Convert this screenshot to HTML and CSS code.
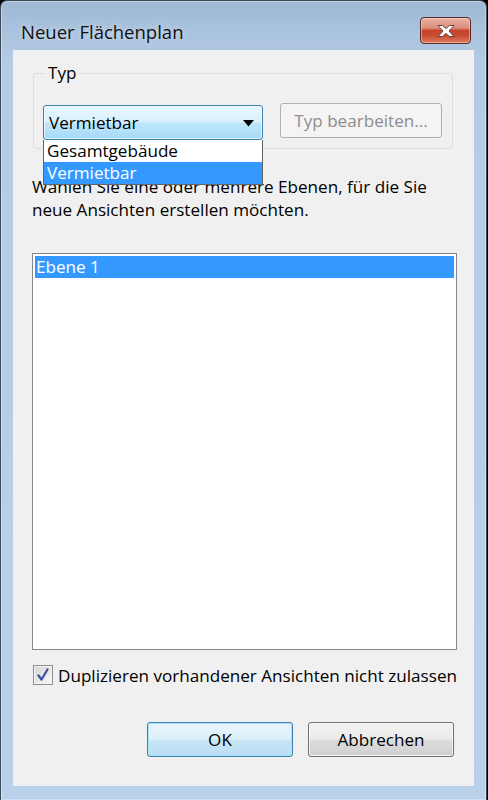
FILE: index.html
```html
<!DOCTYPE html>
<html lang="de">
<head>
<meta charset="utf-8">
<title>Neuer Flächenplan</title>
<link rel="stylesheet" href="styles.css">
</head>
<body>
<div class="window">
  <div class="titlebar">
    <div class="title">Neuer Flächenplan</div>
    <div class="close">
      <svg width="24" height="14" viewBox="0 0 24 14"><path d="M4 1.5h4.5l3.5 3 3.5-3H20l-5 5.5 5 5.5h-4.5L12 9.5l-3.5 3H4l5-5.5z" fill="#fff" stroke="#6b3b36" stroke-width="1" stroke-linejoin="round"/></svg>
    </div>
  </div>
  <div class="client">
    <fieldset class="group">
      <legend>Typ</legend>
      <div class="group-row">
        <div class="combo-wrap">
          <div class="combo">
            <span>Vermietbar</span>
            <svg class="arrow" width="11" height="7" viewBox="0 0 11 7"><path d="M0 0h11L5.5 6.5z" fill="#000"/></svg>
          </div>
          <ul class="dropdown">
            <li>Gesamtgebäude</li>
            <li class="sel">Vermietbar</li>
          </ul>
        </div>
        <div class="btn disabled">Typ bearbeiten...</div>
      </div>
    </fieldset>
    <p class="hint">Wählen Sie eine oder mehrere Ebenen, für die Sie<br>neue Ansichten erstellen möchten.</p>
    <ul class="listbox">
      <li class="sel">Ebene 1</li>
    </ul>
    <label class="check">
      <span class="box"><svg width="14" height="14" viewBox="0 0 14 14"><path d="M2.5 7.5l3 4 6-10" fill="none" stroke="#3b4f9a" stroke-width="2.2" stroke-linecap="round" stroke-linejoin="round"/></svg></span>
      <span>Duplizieren vorhandener Ansichten nicht zulassen</span>
    </label>
    <div class="buttons">
      <div class="btn default">OK</div>
      <div class="btn">Abbrechen</div>
    </div>
  </div>
</div>
</body>
</html>
```
FILE: styles.css
```css
* { box-sizing: border-box; }
html, body { margin: 0; padding: 0; background: #000; }
body {
  width: 488px;
  height: 800px;
  font-family: "Open Sans", "Noto Sans", sans-serif;
  font-size: 17.1px;
  color: #000;
}
.window {
  width: 487px;
  height: 800px;
  border: 1px solid #3d4a57;
  border-bottom: none;
  border-radius: 7px 7px 0 0;
  background: linear-gradient(#9fb9d5 0px, #b3cbe5 60px, #b9d1ea 100%);
  box-shadow: inset 0 0 0 1px rgba(255,255,255,0.35);
  display: flex;
  flex-direction: column;
}
.titlebar {
  height: 49px;
  display: flex;
  align-items: flex-start;
  padding-left: 20px;
  padding-right: 15px;
}
.title {
  margin-top: 20px;
  font-size: 18.5px;
  line-height: 22px;
  color: #111;
  text-shadow: 0 0 6px rgba(255,255,255,0.6);
  flex: 1;
}
.close {
  margin-top: 16px;
  width: 51px;
  height: 27px;
  border: 1px solid #5b2a28;
  border-radius: 4px;
  background: linear-gradient(#eab1a4 0%, #dc8e7c 40%, #c7442e 50%, #c84a30 70%, #dc7d62 100%);
  box-shadow: inset 0 0 0 1px rgba(255,220,210,0.5);
  display: flex;
  align-items: center;
  justify-content: center;
}
.client {
  margin-left: 12px;
  width: 461px;
  height: 736px;
  background: #f0f0f0;
  padding: 12px 17px 0 19px;
  display: flex;
  flex-direction: column;
}
.group {
  margin: 0 4px 0 1px;
  border: 1px solid #d5dfe5;
  border-radius: 3px;
  padding: 21px 9px 8px 9px;
  min-width: 0;
}
.group legend {
  padding: 0 3px;
  margin-left: 2px;
  line-height: 22px;
}
.group-row {
  display: flex;
  align-items: flex-start;
  gap: 17px;
}
.combo-wrap {
  position: relative;
  width: 220px;
}
.combo {
  height: 35px;
  border: 1px solid #3c7fb1;
  border-radius: 3px;
  background: linear-gradient(#eaf6fd 0%, #d9f0fc 48%, #bee6fd 52%, #a7d9f5 100%);
  box-shadow: inset 0 0 0 1px rgba(255,255,255,0.6);
  display: flex;
  align-items: center;
  justify-content: space-between;
  padding: 0 8px 0 5px;
}
.arrow { margin-top: 1px; }
.dropdown {
  position: absolute;
  left: 0;
  top: 35px;
  width: 220px;
  margin: 0;
  padding: 0;
  list-style: none;
  background: #fff;
  border: 1px solid #646464;
  border-top: none;
  z-index: 2;
}
.dropdown li {
  height: 22px;
  line-height: 22px;
  padding-left: 3px;
}
.dropdown li.sel, .listbox li.sel {
  background: #3399ff;
  color: #fff;
}
.btn {
  height: 35px;
  border: 1px solid #707070;
  border-radius: 3px;
  background: linear-gradient(#f2f2f2 0%, #ebebeb 48%, #dddddd 52%, #cfcfcf 100%);
  box-shadow: inset 0 0 0 1px rgba(255,255,255,0.7);
  display: flex;
  align-items: center;
  justify-content: center;
}
.btn.disabled {
  width: 162px;
  margin-top: -2px;
  border-color: #adb2b5;
  background: #f4f4f4;
  box-shadow: none;
  color: #8d8d8d;
}
.hint {
  margin: 26px 0 0 0;
  line-height: 23px;
}
.listbox {
  margin: 32px 0 0 0;
  padding: 2px;
  list-style: none;
  height: 397px;
  background: #fff;
  border: 1px solid #828790;
}
.listbox li {
  height: 22px;
  line-height: 22px;
  padding-left: 1px;
}
.check {
  margin-top: 14px;
  display: flex;
  align-items: center;
  gap: 5px;
  height: 22px;
  padding-left: 1px;
}
.box {
  width: 20px;
  height: 20px;
  border: 1px solid #8e8f8f;
  background: linear-gradient(135deg, #d6d6d6, #f7f7f7);
  box-shadow: inset 0 0 0 1px #f4f4f4;
  display: flex;
  align-items: center;
  justify-content: center;
}
.buttons {
  margin-top: 36px;
  display: flex;
  justify-content: flex-end;
  gap: 15px;
  padding-right: 3px;
}
.buttons .btn { width: 146px; }
.btn.default {
  border-color: #3c7fb1;
  background: linear-gradient(#e9f5fc 0%, #dcf0fb 48%, #c8e6f7 52%, #b9def3 100%);
  box-shadow: inset 0 0 0 1px #a9e3f7;
}
```
